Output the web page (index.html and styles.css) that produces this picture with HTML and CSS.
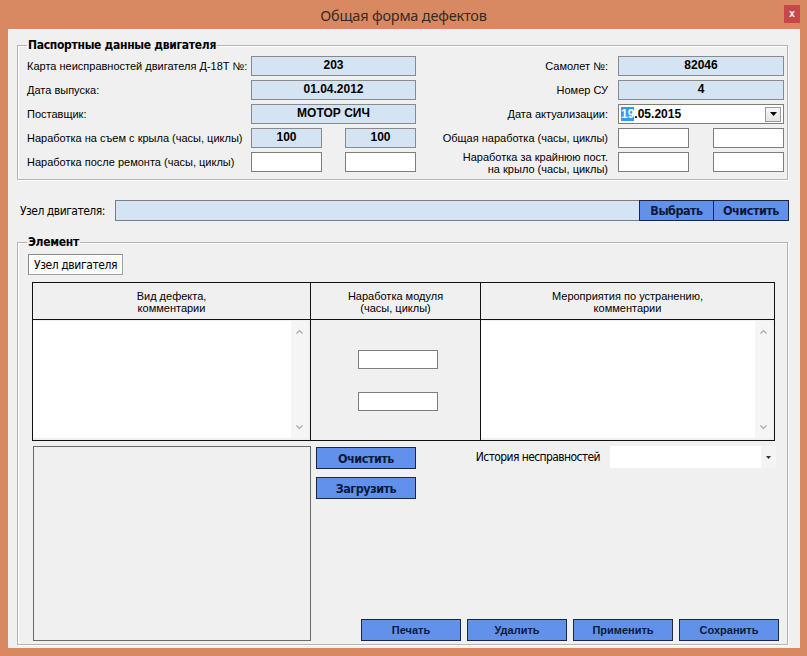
FILE: index.html
```html
<!DOCTYPE html>
<html lang="ru">
<head>
<meta charset="utf-8">
<title>Общая форма дефектов</title>
<link rel="stylesheet" href="styles.css">
</head>
<body>
<div class="window">
  <div class="titlebar">
    <span></span>
    <span class="title">Общая форма дефектов</span>
    <span class="close">x</span>
  </div>
  <div class="client">
    <fieldset class="group passport">
      <legend>Паспортные данные двигателя</legend>
      <div class="pgrid">
        <span class="lbl">Карта неисправностей двигателя Д-18Т №:</span>
        <span class="fld blue">203</span>
        <span class="rlbl">Самолет №:</span>
        <span class="fld blue">82046</span>

        <span class="lbl">Дата выпуска:</span>
        <span class="fld blue">01.04.2012</span>
        <span class="rlbl">Номер СУ</span>
        <span class="fld blue">4</span>

        <span class="lbl">Поставщик:</span>
        <span class="fld blue">МОТОР СИЧ</span>
        <span class="rlbl">Дата актуализации:</span>
        <span class="fld date"><span class="datetext"><span class="sel">19</span>.05.2015</span><span class="ddbtn"><svg width="7" height="4" viewBox="0 0 7 4"><path d="M0 0h7L3.5 4z" fill="#000"/></svg></span></span>

        <span class="lbl">Наработка на съем с крыла (часы, циклы)</span>
        <span class="pair"><span class="fld blue small">100</span><span class="fld blue small">100</span></span>
        <span class="rlbl">Общая наработка (часы, циклы)</span>
        <span class="pair"><span class="fld small"></span><span class="fld small"></span></span>

        <span class="lbl">Наработка после ремонта (часы, циклы)</span>
        <span class="pair"><span class="fld small"></span><span class="fld small"></span></span>
        <span class="rlbl two">Наработка за крайнюю пост.<br>на крыло (часы, циклы)</span>
        <span class="pair"><span class="fld small"></span><span class="fld small"></span></span>
      </div>
    </fieldset>

    <div class="node-row">
      <span class="node-lbl">Узел двигателя:</span>
      <span class="node-fld"></span>
      <span class="btn narrow w74">Выбрать</span>
      <span class="btn narrow w75">Очистить</span>
    </div>

    <fieldset class="group element">
      <legend>Элемент</legend>
      <div class="tabs"><span class="tab">Узел двигателя</span></div>
      <div class="tbl">
        <div class="th">Вид дефекта,<br>комментарии</div>
        <div class="th">Наработка модуля<br>(часы, циклы)</div>
        <div class="th last">Мероприятия по устранению,<br>комментарии</div>
        <div class="td memo-cell">
          <div class="memo">
            <div class="memo-area"></div>
            <div class="vscroll">
              <svg width="7" height="5" viewBox="0 0 7 5"><path d="M0.5 4.5L3.5 1.5L6.5 4.5" fill="none" stroke="#a8a8a8" stroke-width="1.2"/></svg>
              <svg width="7" height="5" viewBox="0 0 7 5"><path d="M0.5 0.5L3.5 3.5L6.5 0.5" fill="none" stroke="#a8a8a8" stroke-width="1.2"/></svg>
            </div>
          </div>
        </div>
        <div class="td inputs-cell">
          <span class="fld mod"></span>
          <span class="fld mod"></span>
        </div>
        <div class="td memo-cell last">
          <div class="memo">
            <div class="memo-area"></div>
            <div class="vscroll">
              <svg width="7" height="5" viewBox="0 0 7 5"><path d="M0.5 4.5L3.5 1.5L6.5 4.5" fill="none" stroke="#a8a8a8" stroke-width="1.2"/></svg>
              <svg width="7" height="5" viewBox="0 0 7 5"><path d="M0.5 0.5L3.5 3.5L6.5 0.5" fill="none" stroke="#a8a8a8" stroke-width="1.2"/></svg>
            </div>
          </div>
        </div>
      </div>

      <div class="lower">
        <div class="picbox"></div>
        <div class="lower-right">
          <div class="lower-top">
            <div class="btncol">
              <span class="btn narrow w100">Очистить</span>
              <span class="btn narrow w100">Загрузить</span>
            </div>
            <span class="hist-lbl">История несправностей</span>
            <span class="combo"><span class="combo-arrow"><svg width="5" height="3" viewBox="0 0 5 3"><path d="M0 0h5L2.5 3z" fill="#333"/></svg></span></span>
          </div>
          <div class="actions">
            <span class="btn w100">Печать</span>
            <span class="btn w100">Удалить</span>
            <span class="btn w100">Применить</span>
            <span class="btn w100">Сохранить</span>
          </div>
        </div>
      </div>
    </fieldset>
  </div>
</div>
</body>
</html>
```
FILE: styles.css
```css
* { box-sizing: border-box; }

body {
  margin: 0;
  background: #d98962;
}

.window {
  width: 807px;
  height: 656px;
  background: #d98962;
  display: flex;
  flex-direction: column;
  font-family: "Liberation Sans", Arial, sans-serif;
  font-size: 11px;
  color: #000;
  overflow: hidden;
}

.titlebar {
  height: 29px;
  flex: none;
  display: grid;
  grid-template-columns: 1fr auto 1fr;
  align-items: start;
}

.title {
  font-family: "Noto Sans", "Open Sans", sans-serif;
  font-size: 14.5px;
  line-height: 20px;
  margin-top: 5px;
  color: #3a2a20;
  letter-spacing: -0.2px;
}

.close {
  justify-self: end;
  margin: 5px 7px 0 0;
  width: 16px;
  height: 18px;
  background: #c8484a;
  color: #fff;
  font: bold 10px/17px "Liberation Sans", Arial, sans-serif;
  text-align: center;
}

.client {
  height: 619px;
  margin: 0 7px 0 8px;
  background: #f0f0f0;
  border-top: 1px solid #f7f7f7;
  display: flex;
  flex-direction: column;
  overflow: hidden;
}

/* narrow text, approximating a condensed face */
.group legend,
.node-lbl,
.tab,
.hist-lbl,
.btn.narrow {
  font-family: "Liberation Sans Narrow", "DejaVu Sans Condensed", "Liberation Sans", sans-serif;
  font-stretch: condensed;
}

/* group boxes */
.group {
  margin: 0 12px 0 9px;
  min-inline-size: 0;
  border: 1px solid #b4b4b4;
  box-shadow: inset 1px 1px 0 #fff, 1px 1px 0 #fff;
  padding: 4px 3px 7px 9px;
}

.group legend {
  padding: 0 1px;
  font-weight: bold;
  font-size: 12px;
  letter-spacing: -0.3px;
  line-height: 14px;
  color: #000;
}

.passport {
  margin-top: 8px;
}

.pgrid {
  display: grid;
  grid-template-columns: 224px 165px 1fr 166px;
  grid-auto-rows: 20px;
  row-gap: 4px;
  align-items: center;
}

.lbl {
  white-space: nowrap;
  line-height: 20px;
}

.rlbl {
  text-align: right;
  padding-right: 10px;
  white-space: nowrap;
  line-height: 20px;
}

.rlbl.two {
  line-height: 12px;
  margin-top: 1px;
}

.fld {
  display: block;
  height: 20px;
  border: 1px solid #7e7e7e;
  background: #fff;
  font-weight: bold;
  font-size: 12px;
  line-height: 17px;
  text-align: center;
}

.fld.blue {
  background: #d5e4f3;
  border-color: #868b92;
}

.pair {
  display: flex;
  justify-content: space-between;
}

.fld.small {
  width: 71px;
}

.fld.date {
  display: flex;
  justify-content: space-between;
  align-items: center;
  text-align: left;
  padding: 0 2px 0 2px;
}

.datetext {
  line-height: 14px;
}

.sel {
  background: #3399ff;
  color: #fff;
}

.ddbtn {
  width: 16px;
  height: 15px;
  border: 1px solid #9a9a9a;
  background: linear-gradient(#f6f6f6, #e4e4e4);
  display: flex;
  align-items: center;
  justify-content: center;
}

/* engine node row */
.node-row {
  display: flex;
  align-items: center;
  height: 21px;
  margin: 20px 11px 0 12px;
}

.node-lbl {
  width: 95px;
  font-size: 12px;
  letter-spacing: -0.5px;
}

.node-fld {
  flex: 1;
  height: 21px;
  background: #d5e4f3;
  border: 1px solid #7a7f86;
  border-right: none;
}

/* buttons */
.btn {
  display: flex;
  align-items: center;
  justify-content: center;
  height: 22px;
  background: #6191ea;
  border: 1px solid #1c2740;
  color: #0b1a3c;
  font-weight: bold;
  font-size: 11px;
}

.btn.narrow {
  font-size: 12.5px;
  letter-spacing: -0.5px;
}

.node-row .btn {
  height: 21px;
}

.w74 { width: 75px; }
.w75 { width: 75px; border-left: none; }
.w100 { width: 100px; }

/* element group */
.element {
  margin-top: 14px;
  padding: 5px 3px 3px 9px;
  flex: 1;
  display: flex;
  flex-direction: column;
  margin-bottom: 3px;
}

.tabs {
  display: flex;
  margin-left: 1px;
}

.tab {
  height: 21px;
  padding: 0 5px;
  display: flex;
  align-items: center;
  border: 1px solid #a0a0a0;
  border-top-color: #8a8a8a;
  border-left-color: #8a8a8a;
  box-shadow: inset 1px 1px 0 #fff;
  background: #fafafa;
  font-size: 12px;
  letter-spacing: -0.4px;
}

.tbl {
  margin: 7px 9px 0 5px;
  display: grid;
  grid-template-columns: 278px 170px 1fr;
  grid-template-rows: 37px 120px;
  border: 1px solid #111;
}

.th {
  border-right: 1px solid #111;
  border-bottom: 1px solid #111;
  text-align: center;
  line-height: 12px;
  padding-top: 7px;
}

.td {
  border-right: 1px solid #111;
}

.th.last, .td.last {
  border-right: none;
}

.memo-cell {
  padding: 1px 2px 2px 0;
}

.memo {
  height: 100%;
  display: flex;
  background: #fff;
}

.memo-area {
  flex: 1;
}

.vscroll {
  width: 17px;
  background: #f5f5f5;
  display: flex;
  flex-direction: column;
  justify-content: space-between;
  align-items: center;
  padding: 8px 0 8px;
}

.inputs-cell {
  display: flex;
  flex-direction: column;
  align-items: center;
  justify-content: center;
  gap: 23px;
  padding-left: 5px;
}

.fld.mod {
  width: 80px;
  height: 19px;
}

/* lower */
.lower {
  flex: 1;
  margin: 5px 0 0 6px;
  display: flex;
  gap: 5px;
}

.picbox {
  width: 278px;
  border: 1px solid #6a6a6a;
  background: #f0f0f0;
}

.lower-right {
  flex: 1;
  display: flex;
  flex-direction: column;
  justify-content: space-between;
}

.lower-top {
  display: flex;
  align-items: flex-start;
}

.btncol {
  margin-top: 1px;
  display: flex;
  flex-direction: column;
  gap: 8px;
}

.hist-lbl {
  margin-left: auto;
  margin-right: 10px;
  line-height: 22px;
  font-size: 12px;
  letter-spacing: -0.6px;
}

.combo {
  width: 166px;
  height: 22px;
  margin-right: 8px;
  background: #fff;
  display: flex;
  justify-content: flex-end;
}

.combo-arrow {
  width: 15px;
  background: #f4f4f4;
  display: flex;
  align-items: center;
  justify-content: center;
}

.actions {
  display: flex;
  justify-content: flex-end;
  gap: 6px;
  padding-right: 5px;
}
```
